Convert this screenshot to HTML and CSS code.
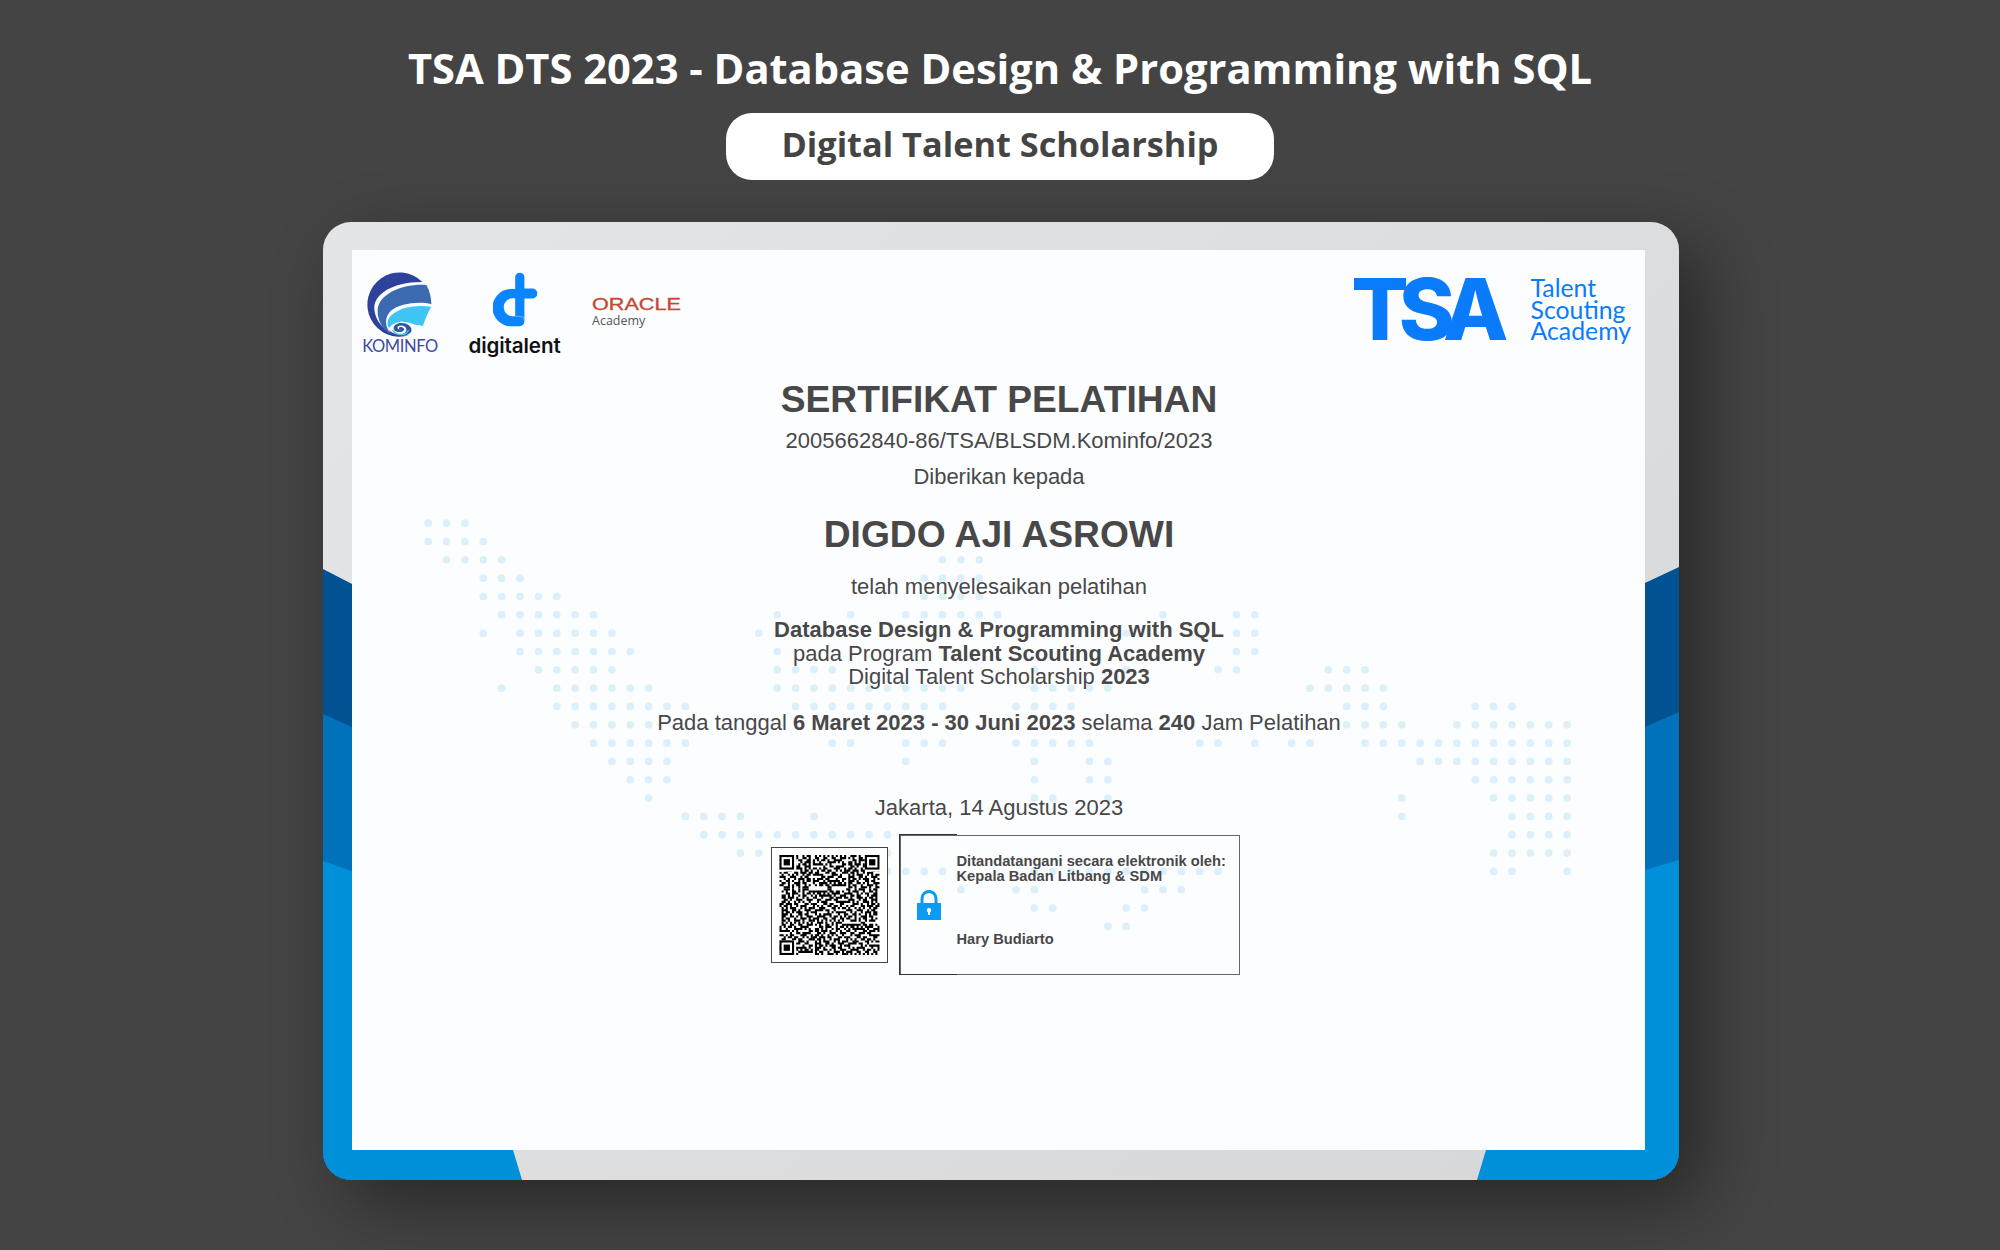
FILE: index.html
```html
<!DOCTYPE html>
<html lang="id">
<head>
<meta charset="utf-8">
<title>TSA DTS 2023 - Database Design &amp; Programming with SQL</title>
<link rel="stylesheet" href="styles.css">
</head>
<body>
<main class="page">
  <h1 class="headline">TSA DTS 2023 - Database Design &amp; Programming with SQL</h1>
  <p class="pill">Digital Talent Scholarship</p>

  <section class="card">
    <svg class="bands" viewBox="0 0 1356 958" aria-hidden="true">
      <path class="band-dark" d="M0 347 29 362V958H0ZM1322 361 1356 345V958H1322Z"/>
      <path class="band-mid" d="M0 492 29 505V958H0ZM1322 505 1356 490V958H1322Z"/>
      <path class="band-light" d="M0 639 29 649V928H190L199 958H0ZM1322 648 1356 638V958H1154L1163 928H1322Z"/>
    </svg>

    <div class="sheet">
      <svg class="dots" viewBox="-.5 -.5 63 23" preserveAspectRatio="none" aria-hidden="true">
        <path d="M0 0H2.01M0 1H3.01M1 2H4.01M28 2H30.01M3 3H5.01M27 3H30.01M3 4H7.01M27 4H30.01M4 5H9.01M19 5h.01M23 5h.01M26 5H31.01M40 5h.01M44 5H45.01M3 6h.01M5 6H10.01M18 6h.01M38 6h.01M44 6H45.01M5 7H11.01M19 7h.01M44 7H45.01M6 8H10.01M19 8H22.01M33 8h.01M38 8h.01M43 8H44.01M49 8H51.01M4 9h.01M7 9H12.01M19 9H29.01M33 9H37.01M48 9H52.01M7 10H14.01M20 10H28.01M32 10H35.01M50 10H52.01M57 10H59.01M8 11H12.01M50 11H53.01M56 11H62.01M9 12H14.01M22 12H23.01M26 12H28.01M32 12H36.01M42 12H43.01M45 12h.01M47 12H48.01M51 12H62.01M10 13H13.01M26 13h.01M33 13h.01M36 13H37.01M54 13H62.01M11 14H13.01M33 14h.01M36 14H37.01M57 14H62.01M12 15h.01M33 15H34.01M37 15h.01M53 15h.01M58 15H62.01M14 16H17.01M21 16h.01M53 16h.01M59 16H62.01M15 17H25.01M59 17H62.01M17 18H18.01M25 18h.01M58 18H62.01M25 19H28.01M33 19H43.01M58 19H59.01M62 19h.01M29 20h.01M32 20H33.01M39 20H41.01M33 21H34.01M38 21H39.01M37 22H38.01"/>
      </svg>

      <header class="logos">
        <div class="logos-left">
          <div class="kominfo">
            <svg class="kominfo-mark" viewBox="170 180 205 205" aria-hidden="true">
              <path class="k-navy" d="M340 213A97 97 0 1 0 300 374C240 378 196 340 195 290 196 250 250 212 340 213Z"/>
              <path class="k-blue" d="M352 222C280 218 205 250 205 300 205 330 220 358 245 370 225 345 226 320 245 300 270 278 330 270 367 280 367 260 362 240 352 222Z"/>
              <path class="k-cyan" d="M366 288C320 280 265 290 240 320 232 335 234 345 240 352 250 335 275 328 300 336 320 343 330 345 342 345 348 325 358 305 366 288Z"/>
              <path class="k-swirl" d="M238 356C250 380 290 382 306 364 312 350 295 334 272 337 250 340 246 362 268 364 285 366 292 352 276 349 268 349 268 354 272 356 262 356 262 344 276 344 300 346 296 372 270 372 256 372 246 364 238 356Z"/>
              <path class="k-curl" d="M250 358C262 376 292 376 298 358"/>
            </svg>
            <span class="kominfo-name">KOMINFO</span>
          </div>
          <div class="digitalent">
            <svg class="digitalent-mark" viewBox="545 186 136 166" aria-hidden="true">
              <path class="d-blue" d="M612 202A14 14 0 0 1 640 202V236H664A15 15 0 0 1 664 266H640V335A15 15 0 0 1 625 350H600A56 56 0 0 1 600 237H612Z"/>
              <path class="d-hole" d="M612 265H605A27.500 27.500 0 0 0 605 320H612Z"/>
              <path class="d-seam" d="M612 320H628A12 12 0 0 1 640 332"/>
            </svg>
            <span class="digitalent-name">digitalent</span>
          </div>
          <div class="oracle">
            <span class="oracle-word">ORACLE</span>
            <span class="oracle-sub">Academy</span>
          </div>
        </div>
        <div class="tsa">
          <span class="tsa-mark">TSA</span>
          <span class="tsa-name">Talent<br>Scouting<br>Academy</span>
        </div>
      </header>

      <div class="cert">
        <h2 class="cert-title">SERTIFIKAT PELATIHAN</h2>
        <p class="cert-line cert-code">2005662840-86/TSA/BLSDM.Kominfo/2023</p>
        <p class="cert-line cert-given">Diberikan kepada</p>
        <h3 class="cert-name">DIGDO AJI ASROWI</h3>
        <p class="cert-line cert-done">telah menyelesaikan pelatihan</p>
        <p class="cert-course"><b>Database Design &amp; Programming with SQL</b><br>pada Program <b>Talent Scouting Academy</b><br>Digital Talent Scholarship <b>2023</b></p>
        <p class="cert-line cert-dates">Pada tanggal <b>6 Maret 2023 - 30 Juni 2023</b> selama <b>240</b> Jam Pelatihan</p>
        <p class="cert-line cert-place">Jakarta, 14 Agustus 2023</p>

        <div class="sign-row">
          <div class="qr">
            <svg class="qr-code" viewBox="0 0 48 48" aria-label="QR code" role="img">
              <defs>
                <path id="qr-tile" d="M0 .5h2m2 0h1m1 0h3m2 0h1m1 0h2M1 1.500h1m1 0h3m2 0h1m2 0h2m1 0h1M0 2.500h3m2 0h1m1 0h1m1 0h2m2 0h2M2 3.500h2m1 0h2m3 0h1m1 0h3M0 4.500h1m1 0h1m2 0h3m1 0h1m1 0h2m1 0h1M1 5.500h3m2 0h1m1 0h2m2 0h3M0 6.500h2m1 0h1m1 0h1m2 0h3m1 0h1m1 0h1M3 7.500h3m1 0h1m2 0h1m1 0h2m1 0h1M0 8.500h1m1 0h2m3 0h2m1 0h3m1 0h2M1 9.500h1m2 0h1m1 0h1m1 0h1m2 0h1m1 0h2M0 10.500h3m2 0h3m2 0h1m1 0h2M2 11.500h1m1 0h1m2 0h1m1 0h3m1 0h2M0 12.500h1m2 0h2m1 0h1m2 0h1m1 0h1m1 0h2M1 13.500h2m1 0h1m2 0h3m1 0h2M0 14.500h2m2 0h1m1 0h1m1 0h2m2 0h1m1 0h1M2 15.500h3m1 0h1m2 0h1m1 0h3"/>
                <g id="qr-finder">
                  <rect class="qr-clear" width="8" height="8"/>
                  <rect class="qr-ring" x=".5" y=".5" width="6" height="6"/>
                  <rect class="qr-core" x="2" y="2" width="3" height="3"/>
                </g>
              </defs>
              <g class="qr-body">
                <use href="#qr-tile"/>
                <use href="#qr-tile" transform="matrix(0 1 -1 0 32 0)"/>
                <use href="#qr-tile" transform="matrix(-1 0 0 -1 48 16)"/>
                <use href="#qr-tile" transform="matrix(-1 0 0 -1 16 32)"/>
                <use href="#qr-tile" transform="matrix(0 -1 1 0 16 32)"/>
                <use href="#qr-tile" transform="translate(32 16)"/>
                <use href="#qr-tile" transform="matrix(0 1 -1 0 16 32)"/>
                <use href="#qr-tile" transform="matrix(-1 0 0 -1 32 48)"/>
                <use href="#qr-tile" transform="matrix(0 -1 1 0 32 48)"/>
              </g>
              <use href="#qr-finder"/>
              <use href="#qr-finder" x="41"/>
              <use href="#qr-finder" y="41"/>
            </svg>
          </div>
          <div class="sign-box">
            <svg class="lock" viewBox="0 0 24 31" aria-hidden="true">
              <path class="lock-shackle" d="M5 15V9.500a7 7 0 0 1 14 0V15"/>
              <path class="lock-body" d="M0 14H24V31H0Z"/>
              <path class="lock-hole" d="M12 19a2.200 2.200 0 0 1 1 4.200V26H11V23.200A2.200 2.200 0 0 1 12 19Z"/>
            </svg>
            <div class="sign-text">
              <p class="sign-by">Ditandatangani secara elektronik oleh:<br>Kepala Badan Litbang &amp; SDM</p>
              <p class="sign-name">Hary Budiarto</p>
            </div>
          </div>
        </div>
      </div>
    </div>
  </section>
</main>
</body>
</html>
```

FILE: styles.css
```css
* { box-sizing: border-box; }
html, body { margin: 0; height: 100%; }
body { background: #444; overflow: hidden; }

.page {
  height: 1250px;
  display: flex;
  flex-direction: column;
  align-items: center;
  padding-top: 40px;
  font-family: "Open Sans", sans-serif;
}
.headline {
  margin: 0;
  font-size: 41.660px;
  line-height: 56px;
  font-weight: 700;
  color: #fff;
  white-space: nowrap;
}
.pill {
  margin: 17px 0 0;
  width: 548px;
  height: 67px;
  border-radius: 26px;
  background: #fff;
  color: #444;
  font-size: 34.300px;
  font-weight: 700;
  line-height: 62px;
  text-align: center;
}

.card {
  position: relative;
  margin: 42px 0 0 2px;
  width: 1356px;
  height: 958px;
  padding: 28px 34px 30px 29px;
  border-radius: 28px;
  overflow: hidden;
  background: linear-gradient(135deg, #e4e5e6, #d6d7d9);
  box-shadow: 24px 24px 70px rgba(0, 0, 0, .42);
}
.bands { position: absolute; inset: 0; width: 100%; height: 100%; }
.band-dark { fill: #005293; }
.band-mid { fill: #0071bb; }
.band-light { fill: #008fd9; }

.sheet {
  position: relative;
  height: 900px;
  background: #fcfdff;
  color: #484848;
  font-family: "Liberation Sans", Arial, sans-serif;
}
.dots {
  position: absolute;
  left: 67.4px;
  top: 264.1px;
  width: 1157.300px;
  height: 421.600px;
  fill: none;
  stroke: #dcf0fb;
  stroke-width: .42;
  stroke-linecap: round;
  stroke-dasharray: 0 1;
}

.logos {
  position: relative;
  height: 127px;
  padding: 21px 14px 0 10px;
  display: flex;
  justify-content: space-between;
  align-items: flex-start;
}
.logos-left { display: flex; align-items: flex-start; }

.kominfo { width: 76px; display: flex; flex-direction: column; align-items: center; }
.kominfo-mark { width: 68px; height: 68px; }
.k-navy { fill: #2f429b; }
.k-blue { fill: #3b6ab1; }
.k-cyan { fill: #40c6f4; }
.k-swirl { fill: #2d57a3; }
.k-curl { fill: none; stroke: #40c6f4; stroke-width: 4; }
.kominfo-name {
  margin-top: -3px;
  font-family: Lato, sans-serif;
  font-size: 16.500px;
  line-height: 20px;
  letter-spacing: -.4px;
  color: #3f4c9e;
}

.digitalent { margin-left: 30px; width: 93px; display: flex; flex-direction: column; align-items: center; }
.digitalent-mark { width: 45px; height: 55px; margin-left: 1px; margin-top: 1px; }
.d-blue { fill: #0a84ff; }
.d-hole { fill: #fcfdff; }
.d-seam { fill: none; stroke: #9ccaf5; stroke-width: 2; }
.digitalent-name {
  margin-top: 7px;
  font-family: Inter, sans-serif;
  font-size: 20.600px;
  line-height: 24px;
  font-weight: 600;
  letter-spacing: -.1px;
  color: #111;
}

.oracle { margin-left: 31px; margin-top: 25px; display: flex; flex-direction: column; }
.oracle-word {
  width: 90px;
  font-family: "Liberation Sans", sans-serif;
  font-size: 16px;
  line-height: 18px;
  color: #c74634;
  transform: scaleX(1.35);
  transform-origin: left center;
  white-space: nowrap;
  -webkit-text-stroke: .3px #c74634;
}
.oracle-sub {
  margin-top: -1px;
  font-family: "Open Sans", sans-serif;
  font-size: 12.500px;
  line-height: 16px;
  color: #555;
}

.tsa { display: flex; align-items: flex-start; gap: 32px; color: #0a7cfb; }
.tsa-mark {
  margin-top: 1px;
  font-family: Inter, sans-serif;
  font-size: 85px;
  line-height: 76px;
  font-weight: 800;
  letter-spacing: -10px;
}
.tsa-name {
  font-family: Lato, sans-serif;
  font-size: 24.800px;
  line-height: 21.500px;
  margin-top: 6px;
}

.cert { position: relative; padding-left: 1px; text-align: center; }
.cert p, .cert h2, .cert h3 { margin: 0; }
.cert-title, .cert-name { font-size: 37.200px; line-height: 44px; font-weight: 700; }
.cert-line { font-size: 22px; line-height: 30px; }
.cert-code { margin-top: 5px !important; }
.cert-given { margin-top: 6px !important; }
.cert-name { margin-top: 20px !important; }
.cert-done { margin-top: 16px !important; }
.cert-course { margin-top: 16px !important; font-size: 22px; line-height: 23.500px; }
.cert-dates { margin-top: 19px !important; }
.cert-place { margin-top: 55px !important; }

.sign-row {
  margin-top: 12px;
  padding-left: 12px;
  display: flex;
  justify-content: center;
  align-items: center;
  gap: 12px;
}
.qr {
  width: 117px;
  height: 116px;
  padding: 7px;
  border: 1.5px solid #444;
  background: #fff;
  display: flex;
}
.qr-code { width: 100%; height: 100%; display: block; }
.qr-body { fill: none; stroke: #000; stroke-width: 1; }
.qr-clear { fill: #fff; }
.qr-ring { fill: none; stroke: #000; stroke-width: 1; }
.qr-core { fill: #000; }

.sign-box {
  position: relative;
  width: 340px;
  height: 140px;
  border: 1.5px solid #666;
  display: flex;
  align-items: stretch;
  text-align: left;
}
.sign-box::before {
  content: "";
  position: absolute;
  left: -1.5px;
  top: -1.5px;
  bottom: -1.5px;
  width: 57px;
  border: 1.5px solid #333;
  border-right: 0;
}
.lock { width: 24px; height: 31px; margin: 53px 0 0 16px; flex: none; }
.lock-shackle { fill: none; stroke: #0a9bf5; stroke-width: 3; }
.lock-body { fill: #0a9bf5; }
.lock-hole { fill: #fff; }
.sign-text { margin-left: 16px; padding-top: 18px; }
.sign-by { font-size: 14.700px; line-height: 15.500px; font-weight: 700; white-space: nowrap; }
.sign-name { margin-top: 46px !important; font-size: 14.700px; line-height: 16px; font-weight: 700; }
```
